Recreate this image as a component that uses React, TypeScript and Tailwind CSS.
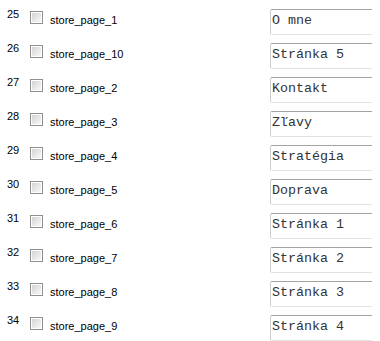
import React from 'react';

const pages = [
  { id: 25, name: 'store_page_1', title: 'O mne' },
  { id: 26, name: 'store_page_10', title: 'Stránka 5' },
  { id: 27, name: 'store_page_2', title: 'Kontakt' },
  { id: 28, name: 'store_page_3', title: 'Zľavy' },
  { id: 29, name: 'store_page_4', title: 'Stratégia' },
  { id: 30, name: 'store_page_5', title: 'Doprava' },
  { id: 31, name: 'store_page_6', title: 'Stránka 1' },
  { id: 32, name: 'store_page_7', title: 'Stránka 2' },
  { id: 33, name: 'store_page_8', title: 'Stránka 3' },
  { id: 34, name: 'store_page_9', title: 'Stránka 4' },
];

function CheckBox() {
  return (
    <span className="block w-[13px] h-[13px] border border-[#8f8f8f] bg-white p-[1px]">
      <span className="block w-full h-full bg-gradient-to-br from-[#d4d4d4] to-[#f8f8f8]" />
    </span>
  );
}

export default function App() {
  return (
    <div className="w-[372px] h-[341px] overflow-hidden bg-white font-['Liberation_Sans',Arial,sans-serif] text-black">
      {pages.map((p) => (
        <div key={p.id} className="grid grid-cols-[30px_20px_220px_1fr] h-[34px] items-start">
          <span className="pl-[7px] pt-[8px] text-[11px] leading-[13px]">{p.id}</span>
          <span className="pt-[11px]">
            <CheckBox />
          </span>
          <span className="pt-[14px] text-[11px] leading-[13px]">{p.name}</span>
          <div className="pt-[7px]">
            <input
              readOnly
              defaultValue={p.title}
              className="w-[130px] h-[26px] px-[1px] pb-[3px] border border-[#cdcdcd] border-t-[#a3a3a3] border-b-[#e3e3e3] rounded-[2px] bg-white text-[13.33px] font-['Liberation_Mono','Courier_New',monospace] text-[#333] outline-none"
            />
          </div>
        </div>
      ))}
    </div>
  );
}
